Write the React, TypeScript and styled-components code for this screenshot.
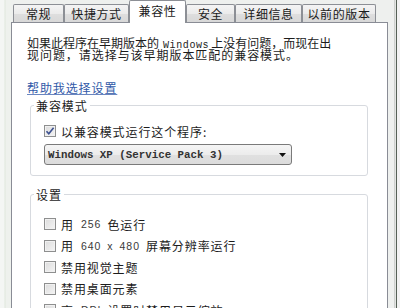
import React from "react";
import styled, { createGlobalStyle } from "styled-components";

const Global = createGlobalStyle`
  html, body { margin: 0; padding: 0; background: #eef0ee; }
  body { font-family: "Noto Sans CJK SC", "Noto Sans", sans-serif; }
`;

const Window = styled.div`
  width: 400px;
  height: 308px;
  overflow: hidden;
  display: flex;
  background: #eef0ee;
  color: #1c1c1c;
`;

const LeftFrame = styled.div`
  width: 11px;
  flex: none;
  background: linear-gradient(90deg, #f4f6f4 0, #f4f6f4 4px, #dfe7dc 5px, #eef1ed 6px, #eef1ed 100%);
`;

const RightFrame = styled.div`
  width: 12px;
  flex: none;
  background: linear-gradient(90deg, #eef0ee 0, #eef0ee 6px, #b9bcb9 6px, #e2e4e2 7px, #e2e4e2 8px, #556055 8px, #556055 9px, #f2f2f2 9px);
`;

const Main = styled.div`
  flex: none;
  width: 377px;
  display: flex;
  flex-direction: column;
`;

const TabRow = styled.div`
  height: 27px;
  display: flex;
  align-items: flex-end;
  padding-left: 2px;
  position: relative;
  z-index: 1;
`;

const Tab = styled.div<{ $w: number; $active?: boolean }>`
  box-sizing: border-box;
  width: ${(p) => p.$w}px;
  height: ${(p) => (p.$active ? 23 : 18)}px;
  margin-bottom: ${(p) => (p.$active ? -1 : 0)}px;
  border: 1px solid #8c8f95;
  border-bottom: none;
  border-radius: 2px 2px 0 0;
  background: ${(p) =>
    p.$active ? "#ffffff" : "linear-gradient(#f4f4f4, #ebebeb 50%, #dedede 51%, #d8d8d8)"};
  display: flex;
  align-items: center;
  justify-content: center;
  font-size: 12px;
  letter-spacing: 0.6px;
  padding-bottom: ${(p) => (p.$active ? 3 : 0)}px;
  color: #1a1a1a;
  white-space: nowrap;
`;

const Panel = styled.div`
  flex: 1;
  background: #ffffff;
  border: 1px solid #898c95;
  border-bottom: none;
  padding: 14px 19px 0 15px;
  display: flex;
  flex-direction: column;
`;

const Intro = styled.div`
  display: flex;
  flex-direction: column;
`;

const IntroLine = styled.span<{ $track: number }>`
  display: block;
  font-size: 12px;
  line-height: 12px;
  height: 12px;
  letter-spacing: ${(p) => p.$track}px;
  white-space: nowrap;
`;

const Latin = styled.span`
  font-family: "Liberation Mono", monospace;
  font-size: 10px;
  letter-spacing: 0.6px;
  margin: 0 2px 0 4px;
`;

const HelpLink = styled.a`
  align-self: flex-start;
  margin-top: 20px;
  font-size: 12px;
  line-height: 13px;
  letter-spacing: 0.9px;
  color: #3159a8;
  text-decoration: underline;
  text-decoration-color: #6a86c0;
  cursor: pointer;
`;

const Group = styled.fieldset<{ $top: number }>`
  margin: ${(p) => p.$top}px 0 0 3px;
  padding: 0 0 10px 13px;
  border: 1px solid #d7dadf;
  border-radius: 3px;
  min-width: 0;
  display: flex;
  flex-direction: column;
`;

const Legend = styled.legend`
  margin-left: -10px;
  padding: 0 2px;
  font-size: 12px;
  line-height: 13px;
  letter-spacing: 0.9px;
  color: #1c1c1c;
`;

const CheckList = styled.div`
  display: flex;
  flex-direction: column;
  gap: 5.5px;
  padding-top: 15px;
`;

const CheckRow = styled.label<{ $top?: number }>`
  display: flex;
  align-items: center;
  height: 16px;
  margin-top: ${(p) => p.$top ?? 0}px;
  font-size: 12px;
  letter-spacing: 0.9px;
  white-space: nowrap;
  color: #1c1c1c;
`;

const Box = styled.span`
  box-sizing: border-box;
  width: 12px;
  height: 12px;
  margin-right: 5px;
  flex: none;
  border: 1px solid #8e8f8f;
  background: linear-gradient(135deg, #dcdcdc, #f4f4f4);
  box-shadow: inset 0 0 0 1px #f1f1f1;
  display: flex;
  align-items: center;
  justify-content: center;
`;

const Num = styled.span`
  font-family: "Liberation Sans", sans-serif;
  font-size: 10.5px;
  letter-spacing: 1px;
  word-spacing: 2px;
  color: #3a3a3a;
  margin: 0 6px 0 7px;
`;

const Select = styled.div`
  box-sizing: border-box;
  width: 248px;
  height: 21px;
  margin-top: 5px;
  border: 1px solid #7a7a7a;
  border-radius: 3px;
  background: linear-gradient(#f5f5f5, #ececec 50%, #e0e0e0 51%, #dcdcdc);
  display: flex;
  align-items: center;
  justify-content: space-between;
  padding: 0 5px 0 3px;
  font-family: "Liberation Mono", monospace;
  font-size: 10.8px;
  font-weight: bold;
  color: #333;
  white-space: nowrap;
`;

const Check = () => (
  <svg width="10" height="10" viewBox="0 0 10 10">
    <path d="M1.5 5.2 L3.8 7.8 L8.6 1.8" fill="none" stroke="#3d5190" strokeWidth="1.6" />
  </svg>
);

const Arrow = () => (
  <svg width="7" height="4" viewBox="0 0 7 4">
    <path d="M0 0 H7 L3.5 4 Z" fill="#111" />
  </svg>
);

const tabs: { label: string; w: number; active?: boolean }[] = [
  { label: "常规", w: 51 },
  { label: "快捷方式", w: 65 },
  { label: "兼容性", w: 57, active: true },
  { label: "安全", w: 49 },
  { label: "详细信息", w: 67 },
  { label: "以前的版本", w: 74 },
];

export default function App() {
  return (
    <>
      <Global />
      <Window>
        <LeftFrame />
        <Main>
          <TabRow>
            {tabs.map((t) => (
              <Tab key={t.label} $w={t.w} $active={t.active}>
                {t.label}
              </Tab>
            ))}
          </TabRow>
          <Panel>
            <Intro>
              <IntroLine $track={0}>
                如果此程序在早期版本的<Latin>Windows</Latin>上没有问题，而现在出
              </IntroLine>
              <IntroLine $track={0.95}>现问题，请选择与该早期版本匹配的兼容模式。</IntroLine>
            </Intro>
            <HelpLink>帮助我选择设置</HelpLink>
            <Group $top={5}>
              <Legend>兼容模式</Legend>
              <CheckRow $top={11}>
                <Box>
                  <Check />
                </Box>
                以兼容模式运行这个程序:
              </CheckRow>
              <Select>
                <span>Windows XP (Service Pack 3)</span>
                <Arrow />
              </Select>
            </Group>
            <Group $top={12}>
              <Legend>设置</Legend>
              <CheckList>
                <CheckRow>
                  <Box />用<Num>256</Num>色运行
                </CheckRow>
                <CheckRow>
                  <Box />用<Num>640 x 480</Num>屏幕分辨率运行
                </CheckRow>
                <CheckRow>
                  <Box />禁用视觉主题
                </CheckRow>
                <CheckRow>
                  <Box />禁用桌面元素
                </CheckRow>
                <CheckRow>
                  <Box />高<Num>DPI</Num>设置时禁用显示缩放
                </CheckRow>
              </CheckList>
            </Group>
          </Panel>
        </Main>
        <RightFrame />
      </Window>
    </>
  );
}
